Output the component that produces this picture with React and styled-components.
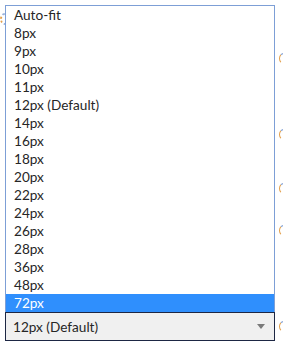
import React from "react";
import styled, { createGlobalStyle } from "styled-components";

const GlobalStyle = createGlobalStyle`
  html, body {
    margin: 0;
    padding: 0;
    background: #ffffff;
  }
  body {
    font-family: Lato, "Liberation Sans", sans-serif;
  }
`;

const Page = styled.div`
  position: relative;
  width: 283px;
  height: 349px;
  overflow: hidden;
  padding: 5px 0 0 5px;
  box-sizing: border-box;
`;

const Dropdown = styled.div`
  position: relative;
  z-index: 1;
  display: flex;
  flex-direction: column;
  width: 270px;
`;

const ListBox = styled.ul`
  list-style: none;
  margin: 0;
  padding: 0;
  background: #ffffff;
  border: 1px solid #7d9fd6;
  border-bottom: none;
`;

const Option = styled.li`
  height: 18px;
  line-height: 18px;
  padding-left: 8px;
  font-size: 13.6px;
  color: ${props => (props.selected ? "#ffffff" : "#262626")};
  background: ${props => (props.selected ? "#2f8ffd" : "transparent")};
  white-space: nowrap;
`;

const SelectBox = styled.div`
  display: flex;
  align-items: center;
  justify-content: space-between;
  height: 27px;
  padding: 0 9px 0 7px;
  background: #f0f0f0;
  border: 1px solid #1d2744;
  font-size: 13.6px;
  color: #262626;
`;

const Arrow = styled.span`
  width: 0;
  height: 0;
  border-left: 4px solid transparent;
  border-right: 4px solid transparent;
  border-top: 5px solid #7a7a7a;
`;

const PeekRadio = styled.span`
  position: absolute;
  left: 279px;
  width: 10px;
  height: 11px;
  border-radius: 50%;
  border: 1.5px solid transparent;
  border-left-color: #e3a04c;
  border-top-color: #8aa7d8;
  box-sizing: border-box;
`;

const PeekGear = styled.span`
  position: absolute;
  left: 0px;
  top: 13px;
  width: 9px;
  height: 12px;
  border-radius: 50%;
  border: 2px dotted #9bb3dc;
  border-left-color: #e3a04c;
  box-sizing: border-box;
`;

const sizes = [
  "Auto-fit",
  "8px",
  "9px",
  "10px",
  "11px",
  "12px (Default)",
  "14px",
  "16px",
  "18px",
  "20px",
  "22px",
  "24px",
  "26px",
  "28px",
  "36px",
  "48px",
  "72px"
];

const radioTops = [53, 129, 183, 225, 321];

export default function App() {
  return (
    <>
      <GlobalStyle />
      <Page>
        <PeekGear />
        {radioTops.map(top => (
          <PeekRadio key={top} style={{ top }} />
        ))}
        <Dropdown>
          <ListBox>
            {sizes.map(size => (
              <Option key={size} selected={size === "72px"}>
                {size}
              </Option>
            ))}
          </ListBox>
          <SelectBox>
            <span>12px (Default)</span>
            <Arrow />
          </SelectBox>
        </Dropdown>
      </Page>
    </>
  );
}
